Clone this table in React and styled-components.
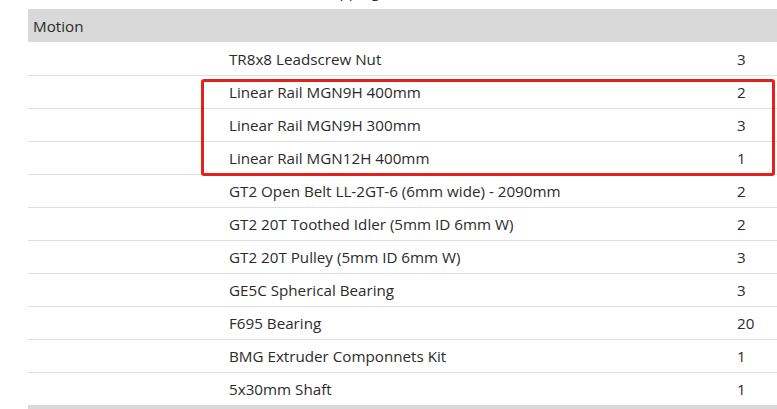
import React from 'react'
import styled, { createGlobalStyle } from 'styled-components'

const GlobalStyle = createGlobalStyle`
  html, body {
    margin: 0;
    padding: 0;
    background: #fff;
    overflow: hidden;
  }
  body {
    font-family: "Open Sans", "Noto Sans", sans-serif;
    color: #2b2b2b;
  }
`

const Page = styled.div`
  width: 777px;
  height: 409px;
  overflow: hidden;
  padding-left: 28px;
  box-sizing: border-box;
`

const Caption = styled.div`
  height: 9px;
  overflow: hidden;
  padding-left: 290px;
  span {
    display: block;
    margin-top: -19px;
    line-height: 20px;
    font-size: 15.2px;
  }
`

const Wrap = styled.div`
  position: relative;
  width: 800px;
`

const Table = styled.table`
  width: 800px;
  border-collapse: collapse;
  font-size: 15.2px;
  table-layout: fixed;
`

const GroupRow = styled.tr`
  background: #d9d9d9;
  td {
    height: 33px;
    padding: 0 5px;
    border: none;
  }
`

const Row = styled.tr`
  td {
    height: 32px;
    padding: 0 5px;
    border-top: 1px solid #dedede;
    white-space: nowrap;
  }
  &:first-of-type td {
    border-top: none;
    height: 33px;
  }
`

const FootRow = styled.tr`
  background: #d9d9d9;
  td {
    height: 33px;
  }
`

const Highlight = styled.div`
  position: absolute;
  left: 173px;
  top: 70px;
  width: 568px;
  height: 91px;
  border: 3px solid #e3211d;
  border-radius: 3px;
  pointer-events: none;
`

const parts = [
  ['TR8x8 Leadscrew Nut', 3],
  ['Linear Rail MGN9H 400mm', 2],
  ['Linear Rail MGN9H 300mm', 3],
  ['Linear Rail MGN12H 400mm', 1],
  ['GT2 Open Belt LL-2GT-6 (6mm wide) - 2090mm', 2],
  ['GT2 20T Toothed Idler (5mm ID 6mm W)', 2],
  ['GT2 20T Pulley (5mm ID 6mm W)', 3],
  ['GE5C Spherical Bearing', 3],
  ['F695 Bearing', 20],
  ['BMG Extruder Componnets Kit', 1],
  ['5x30mm Shaft', 1],
]

const App = () => {
  return (
    <Page>
      <GlobalStyle/>
      <Caption><span>Shipping</span></Caption>
      <Wrap>
        <Table>
          <colgroup>
            <col style={{width: 196}}/>
            <col style={{width: 508}}/>
            <col style={{width: 96}}/>
          </colgroup>
          <tbody>
            <GroupRow><td colSpan={3}>Motion</td></GroupRow>
          </tbody>
          <tbody>
            {parts.map(([name, qty]) => (
              <Row key={name}>
                <td></td>
                <td>{name}</td>
                <td>{qty}</td>
              </Row>
            ))}
            <FootRow><td colSpan={3}></td></FootRow>
          </tbody>
        </Table>
        <Highlight/>
      </Wrap>
    </Page>
  )
}

export default App
